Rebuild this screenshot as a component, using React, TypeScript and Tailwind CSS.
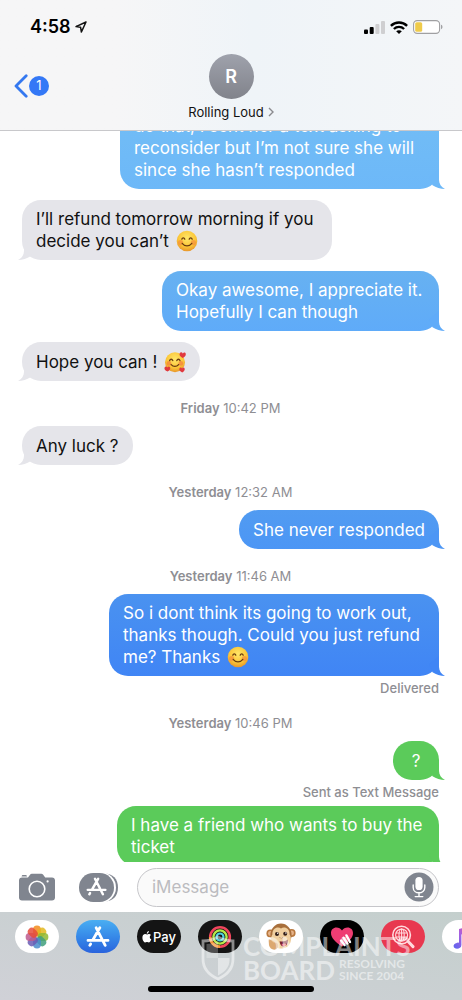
import React from 'react';

const tones = {
  gray: { bubble: 'bg-[#e5e5ea] text-[#111111]', tail: 'text-[#e5e5ea]' },
  sky: {
    bubble: 'bg-linear-to-b from-[#72bdf5] to-[#6db8f8] text-white',
    tail: 'text-[#6db8f8]',
  },
  azure: {
    bubble: 'bg-linear-to-b from-[#67b1f1] to-[#5fabf9] text-white',
    tail: 'text-[#5fabf9]',
  },
  blue: {
    bubble: 'bg-linear-to-b from-[#519bf1] to-[#4c96f5] text-white',
    tail: 'text-[#4c96f5]',
  },
  royal: {
    bubble: 'bg-linear-to-b from-[#4a92f0] to-[#4085f5] text-white',
    tail: 'text-[#4085f5]',
  },
  green: { bubble: 'bg-[#5bcb5a] text-white', tail: 'text-[#5bcb5a]' },
};

type BubbleProps = {
  tone: keyof typeof tones;
  lines: React.ReactNode[];
  width?: string;
};

const Bubble = ({ tone, lines, width = '' }: BubbleProps) => {
  const incoming = tone === 'gray';

  return (
    <div className={incoming ? 'flex justify-start' : 'flex justify-end'}>
      <div
        className={`relative flex min-h-[39px] items-center rounded-[19px] px-[14px] py-2 ${width} ${tones[tone].bubble}`}
      >
        <p className="text-[17px] leading-[22px]">
          {lines.map((line, index) => (
            <span key={index} className="block whitespace-nowrap">
              {line}
            </span>
          ))}
        </p>
        <svg
          viewBox="0 0 16 20"
          className={`absolute bottom-0 h-5 w-4 ${
            incoming ? '-left-1 -scale-x-100' : '-right-1.5'
          } ${tones[tone].tail}`}
          fill="currentColor"
          aria-hidden="true"
        >
          <path d="M10 0V11C10.2 15 12 18 16 20C11.5 19.8 7 18.6 3.5 16.2L0 8Z" />
        </svg>
      </div>
    </div>
  );
};

const Timestamp = ({ day, time }: { day: string; time: string }) => (
  <p className="pt-[19px] pb-2.5 text-center text-[13px] leading-4 text-[#8e8e93]">
    <span className="font-semibold">{day}</span> {time}
  </p>
);

const Status = ({ children }: { children: React.ReactNode }) => (
  <p className="pt-1 text-right text-[13px] leading-4 font-medium text-[#8e8e93]">
    {children}
  </p>
);

const SmileEmoji = () => (
  <svg
    viewBox="0 0 22 22"
    className="ml-0.5 inline h-[22px] w-[22px] align-top"
    role="img"
    aria-label="smiling face"
  >
    <defs>
      <radialGradient id="smile" cx="50%" cy="35%" r="65%">
        <stop offset="0" stopColor="#ffe769" />
        <stop offset="0.65" stopColor="#fbc638" />
        <stop offset="1" stopColor="#e8962a" />
      </radialGradient>
    </defs>
    <circle cx="11" cy="11" r="10.3" fill="url(#smile)" />
    <circle cx="4.6" cy="12.6" r="2.6" fill="#f58a3c" opacity="0.65" />
    <circle cx="17.4" cy="12.6" r="2.6" fill="#f58a3c" opacity="0.65" />
    <g fill="none" stroke="#6b3d10" strokeWidth="1.3" strokeLinecap="round">
      <path d="M5.8 9.2C6.4 7.4 8.2 7.4 8.8 9.2M13.2 9.2C13.8 7.4 15.6 7.4 16.2 9.2" />
      <path d="M6.2 13.4C8.6 16.7 13.4 16.7 15.8 13.4" />
    </g>
  </svg>
);

const HeartsEmoji = () => (
  <svg
    viewBox="0 0 22 22"
    className="ml-0.5 inline h-[22px] w-[22px] align-top"
    role="img"
    aria-label="smiling face with hearts"
  >
    <defs>
      <radialGradient id="hearts" cx="50%" cy="35%" r="65%">
        <stop offset="0" stopColor="#ffe769" />
        <stop offset="0.65" stopColor="#fbc638" />
        <stop offset="1" stopColor="#e8962a" />
      </radialGradient>
    </defs>
    <circle cx="11" cy="11.2" r="10" fill="url(#hearts)" />
    <circle cx="5" cy="12.4" r="2.4" fill="#f2703c" opacity="0.6" />
    <circle cx="16.8" cy="12.4" r="2.4" fill="#f2703c" opacity="0.6" />
    <g fill="none" stroke="#6b3d10" strokeWidth="1.3" strokeLinecap="round">
      <path d="M5.6 9.6C6.2 7.8 8.2 7.8 8.8 9.6M12.8 9.6C13.4 7.8 15.4 7.8 16 9.6" />
      <path d="M7.2 13.6C9.2 16 12.6 16 14.6 13.6" />
    </g>
    <g fill="#e0393e">
      <path d="M18.6 6.9C16 5.4 15 3.8 15.7 2.2C16.5 0.8 18.2 1.1 18.8 2.4C19.7 1.2 21.5 1.4 21.8 2.9C22 4.6 20.7 5.9 18.6 6.9Z" />
      <path d="M3.6 20.6C1 19.6 0 18 0.6 16.5C1.2 15.2 2.7 15.3 3.4 16.4C4.2 15.2 5.8 15.3 6.2 16.7C6.5 18.2 5.5 19.5 3.6 20.6Z" />
      <path d="M18.2 21.4C15.8 20.4 14.8 18.9 15.4 17.5C16 16.2 17.4 16.3 18 17.4C18.8 16.2 20.3 16.3 20.7 17.7C21 19.1 20 20.4 18.2 21.4Z" />
    </g>
  </svg>
);

const StatusBar = () => (
  <div className="flex h-[54px] items-center justify-between pr-[19px] pl-[30px]">
    <div className="flex items-center gap-1">
      <span className="text-lg leading-5 font-semibold text-black">4:58</span>
      <svg viewBox="0 0 12 12" className="h-3 w-3" fill="none" aria-hidden="true">
        <path
          d="M11 1L1 5.6L5.6 6.3L6.4 11Z"
          stroke="#111"
          strokeWidth="1.5"
          strokeLinejoin="round"
        />
      </svg>
    </div>
    <div className="flex items-center gap-[5px]">
      <svg viewBox="0 0 21 13" className="h-[13px] w-[21px]" aria-hidden="true">
        <rect x="0" y="8.5" width="4" height="4.5" rx="1" fill="#000" />
        <rect x="5.7" y="6" width="4" height="7" rx="1" fill="#000" />
        <rect x="11.4" y="3" width="4" height="10" rx="1" fill="#cfcfd1" />
        <rect x="17" y="0" width="4" height="13" rx="1" fill="#cfcfd1" />
      </svg>
      <svg viewBox="0 0 18 13" className="h-[13px] w-[18px]" aria-hidden="true">
        <g fill="none" stroke="#000" strokeWidth="2.4">
          <path d="M0.9 4.8C5.4 0.3 12.6 0.3 17.1 4.8" />
          <path d="M3.9 8C6.8 5.2 11.2 5.2 14.1 8" />
        </g>
        <path d="M9 13L6.2 10.2C7.8 8.8 10.2 8.8 11.8 10.2Z" fill="#000" />
      </svg>
      <svg viewBox="0 0 30 14" className="h-[14px] w-[30px]" aria-hidden="true">
        <rect
          x="0.6"
          y="0.6"
          width="26"
          height="12.8"
          rx="3.6"
          fill="#fff"
          stroke="#a0a0a2"
          strokeWidth="1.1"
        />
        <rect x="2.2" y="2.2" width="7" height="9.6" rx="1.6" fill="#efcb4b" />
        <path d="M28.2 4.8C29.8 5.4 29.8 8.6 28.2 9.2Z" fill="#8e8e90" />
      </svg>
    </div>
  </div>
);

const Header = () => (
  <header className="shrink-0 border-b border-[#c8c8cb] bg-linear-to-r from-[#f6f6f7] from-25% via-[#eff4f8] via-55% to-[#f4f6f8]">
    <StatusBar />
    <div className="grid h-[76px] grid-cols-3">
      <button
        type="button"
        aria-label="Back, 1 unread"
        className="mt-5 ml-3.5 flex h-6 items-center self-start"
      >
        <svg viewBox="0 0 15 24" className="h-6 w-[15px]" fill="none">
          <path
            d="M12.2 1.8L2 12L12.2 22.2"
            stroke="#3478f0"
            strokeWidth="2.8"
            strokeLinecap="round"
            strokeLinejoin="round"
          />
        </svg>
        <span className="flex h-5 w-5 items-center justify-center rounded-full bg-[#3478f6] text-[13px] text-white">
          1
        </span>
      </button>
      <a href="#contact" className="flex flex-col items-center">
        <span className="flex h-[45px] w-[45px] items-center justify-center rounded-full bg-linear-to-b from-[#9fa2ac] to-[#81838b] text-lg font-semibold text-white">
          R
        </span>
        <span className="mt-1 flex items-center gap-1 text-[13px] leading-[18px] text-[#111111]">
          Rolling Loud
          <svg viewBox="0 0 6 10" className="h-2.5 w-1.5" fill="none">
            <path d="M1 1L5 5L1 9" stroke="#8a8a8e" strokeWidth="1.4" />
          </svg>
        </span>
      </a>
    </div>
  </header>
);

const AppStoreGlyph = () => (
  <g fill="none" stroke="currentColor" strokeWidth="2.8" strokeLinecap="round">
    <path d="M10.2 1.8L19.2 19.4M13.8 1.8L6.8 14M2 14.4H14.6M18.6 14.4H22M4.6 18L3.8 19.4" />
  </g>
);

const Composer = () => (
  <form
    className="flex h-[50px] shrink-0 items-center bg-white pr-[23px] pl-[19px]"
    onSubmit={(e) => e.preventDefault()}
  >
    <button type="button" aria-label="Camera" className="mr-6">
      <svg viewBox="0 0 36 28" className="h-7 w-9">
        <path
          d="M3 4.5H9L11.2 1.6C11.6 1.1 12.2 0.8 12.8 0.8H22.4C23 0.8 23.6 1.1 24 1.6L26.2 4.5H33C34.8 4.5 36 5.7 36 7.5V24.5C36 26.3 34.8 27.5 33 27.5H3C1.2 27.5 0 26.3 0 24.5V7.5C0 5.7 1.2 4.5 3 4.5Z"
          fill="#80858f"
        />
        <path d="M2.6 3.6C2.6 2.6 3.2 2 4 2H6.6C7.4 2 8 2.6 8 3.6Z" fill="#80858f" />
        <circle cx="18" cy="16" r="7.8" fill="none" stroke="#fff" strokeWidth="1.6" />
        <circle cx="28.6" cy="8.4" r="1.1" fill="#fff" />
      </svg>
    </button>
    <button type="button" aria-label="Apps" className="mr-[19px]">
      <svg viewBox="0 0 39 29" className="h-[29px] w-[39px]">
        <path d="M25 0.5C34 0.5 39 6 39 14.5C39 23 34 28.5 25 28.5Z" fill="#80858f" />
        <rect x="-2" y="-1" width="39" height="31" rx="15.5" fill="#fff" />
        <rect x="0" y="0" width="35" height="29" rx="14.2" fill="#80858f" />
        <g transform="translate(7 4.2) scale(0.88)" color="#fff">
          <AppStoreGlyph />
        </g>
      </svg>
    </button>
    <div className="flex h-[39px] min-w-0 flex-1 items-center rounded-full border border-[#c6c6ca] bg-[#fafafa] pr-1 pl-3.5">
      <input
        type="text"
        aria-label="iMessage"
        placeholder="iMessage"
        className="min-w-0 flex-1 bg-transparent text-[17px] leading-[22px] outline-none placeholder:text-[#bcbcc0]"
      />
      <button type="button" aria-label="Record audio">
        <svg viewBox="0 0 30 30" className="h-[30px] w-[30px]">
          <circle cx="15" cy="15" r="14.5" fill="#80858f" />
          <rect x="11.4" y="5" width="7.2" height="13" rx="3.6" fill="#fff" />
          <path
            d="M9.2 13V15.4C9.2 22.6 20.8 22.6 20.8 15.4V13M15 21V24.4M11.2 24.6H18.8"
            fill="none"
            stroke="#fff"
            strokeWidth="1.4"
            strokeLinecap="round"
          />
        </svg>
      </button>
    </div>
  </form>
);

const petals = [
  { color: '#f28c1c', angle: 0 },
  { color: '#e3b91f', angle: 45 },
  { color: '#8fb834', angle: 90 },
  { color: '#3f9f7d', angle: 135 },
  { color: '#4a8ccb', angle: 180 },
  { color: '#6a5cb4', angle: 225 },
  { color: '#bd5a8e', angle: 270 },
  { color: '#e64c3a', angle: 315 },
];

const PhotosIcon = () => (
  <svg viewBox="0 0 24 24" className="h-6 w-6" aria-hidden="true">
    {petals.map((petal) => (
      <rect
        key={petal.angle}
        x="8.1"
        y="0.6"
        width="7.8"
        height="10.8"
        rx="3.9"
        fill={petal.color}
        opacity="0.85"
        transform={`rotate(${petal.angle} 12 12)`}
      />
    ))}
  </svg>
);

const AppStoreIcon = () => (
  <svg viewBox="0 0 24 22" className="h-[22px] w-6 text-white" aria-hidden="true">
    <AppStoreGlyph />
  </svg>
);

const PayIcon = () => (
  <span className="flex items-center gap-px text-[13px] leading-4 font-medium text-white">
    <svg viewBox="0 0 10 12" className="h-3 w-2.5" fill="#fff" aria-hidden="true">
      <path d="M6.9 0.1C7 1.5 5.9 2.7 4.8 2.7C4.7 1.4 5.7 0.3 6.9 0.1ZM8.9 4C7.2 5.1 7.4 7.6 9.3 8.4C8.8 9.9 7.8 11.5 6.7 11.5C6 11.5 5.8 11.1 5 11.1C4.2 11.1 3.9 11.5 3.3 11.5C1.9 11.5 0.4 8.8 0.4 6.7C0.4 4.5 1.7 3.1 3.2 3.1C4 3.1 4.6 3.6 5.1 3.6C5.6 3.6 6.2 3 7.2 3C7.9 3 8.5 3.4 8.9 4Z" />
    </svg>
    Pay
  </span>
);

const ActivityIcon = () => (
  <svg viewBox="0 0 24 24" className="h-6 w-6" fill="none" aria-hidden="true">
    <circle cx="12" cy="12" r="9.8" stroke="#f0455c" strokeWidth="2.6" />
    <path d="M2.2 12A9.8 9.8 0 0 0 12 21.8" stroke="#f59b3a" strokeWidth="2.6" />
    <circle cx="12" cy="12" r="6.6" stroke="#b4e84a" strokeWidth="2.4" />
    <circle cx="12" cy="12" r="3.5" stroke="#4fd3e0" strokeWidth="2.2" />
  </svg>
);

const MonkeyIcon = () => (
  <svg viewBox="0 0 30 30" className="h-[30px] w-[30px]" aria-hidden="true">
    <circle cx="4.4" cy="11.5" r="4" fill="#b9793f" />
    <circle cx="4.4" cy="11.5" r="2.4" fill="#e7b48a" />
    <circle cx="25.6" cy="11" r="4" fill="#b9793f" />
    <circle cx="25.6" cy="11" r="2.4" fill="#e7b48a" />
    <ellipse cx="15" cy="13" rx="10.6" ry="11.4" fill="#a86f3c" />
    <path
      d="M15 6.5C18 4 24 6 23.6 12.4C26.4 16 25.6 26.4 15 26.4C4.4 26.4 3.6 16 6.4 12.4C6 6 12 4 15 6.5Z"
      fill="#f0cf9f"
    />
    <circle cx="11" cy="12" r="2" fill="#33201a" />
    <circle cx="19.2" cy="11.8" r="2" fill="#33201a" />
    <circle cx="11.7" cy="11.2" r="0.7" fill="#fff" />
    <circle cx="19.9" cy="11" r="0.7" fill="#fff" />
    <path d="M14 15.6L14.6 16.2M16.6 15.6L16 16.2" stroke="#6b3d20" strokeWidth="1" />
    <path
      d="M13.6 19.2C17 20 19.4 19.4 22 17.6C22.2 21.4 20.6 24.4 17.4 24.4C15 24.2 13.8 22 13.6 19.2Z"
      fill="#7d2530"
    />
    <path d="M15.4 22.8C17 21 19.4 21 20.4 22.4C18.8 24.6 16.8 24.6 15.4 22.8Z" fill="#ee6d7d" />
    <path
      d="M2.6 17.4C4 16.4 5.6 18 7 20.2L10.4 20.8C13 22 12.6 25.8 10.2 27.2C7 28.6 3.8 26.4 3 23.2Z"
      fill="#dca870"
    />
  </svg>
);

const HeartIcon = () => (
  <svg viewBox="0 0 24 22" className="h-[22px] w-6" aria-hidden="true">
    <path
      d="M12 20.4C4.6 15.8 1 11.4 1 7C1 3.6 3.4 1.4 6.4 1.4C8.8 1.4 10.8 2.6 12 4.6C13.2 2.6 15.2 1.4 17.6 1.4C20.6 1.4 23 3.6 23 7C23 11.4 19.4 15.8 12 20.4Z"
      fill="#ee3d73"
    />
    <g stroke="#fff" strokeWidth="2.4" strokeLinecap="round">
      <path d="M16.4 9.4L20 16" />
      <path d="M13.6 11.8L17.4 17.6" />
      <path d="M11 14.6L14.6 19" />
    </g>
  </svg>
);

const SearchIcon = () => (
  <svg
    viewBox="0 0 24 24"
    className="h-6 w-6"
    fill="none"
    stroke="#ffd9dd"
    strokeLinecap="round"
    aria-hidden="true"
  >
    <circle cx="10.6" cy="10" r="8.8" strokeWidth="1.6" />
    <circle cx="10.6" cy="10" r="6" strokeWidth="1.1" />
    <ellipse cx="10.6" cy="10" rx="2.6" ry="6" strokeWidth="1.1" />
    <path d="M5 8H16.2M5 12H16.2M10.6 4V16" strokeWidth="1.1" />
    <path d="M17.4 16.8L22 21.6" strokeWidth="3" />
  </svg>
);

const MusicIcon = () => (
  <svg viewBox="0 0 24 24" className="h-6 w-6" aria-hidden="true">
    <defs>
      <linearGradient id="note" x1="0" y1="1" x2="1" y2="0">
        <stop offset="0" stopColor="#5a66f0" />
        <stop offset="0.5" stopColor="#a85fe0" />
        <stop offset="1" stopColor="#f0508c" />
      </linearGradient>
    </defs>
    <path
      d="M7 4L21 1V17.4C21 22 13.4 22.6 13.4 18.6C13.4 16 16 15.4 18.6 15V7.4L9.4 9.4V20C9.4 24.6 1.6 25 1.6 21C1.6 18.4 4.4 17.8 7 17.4Z"
      fill="url(#note)"
    />
  </svg>
);

const apps = [
  { name: 'Photos', icon: <PhotosIcon />, color: 'bg-white' },
  {
    name: 'App Store',
    icon: <AppStoreIcon />,
    color: 'bg-linear-to-b from-[#4aaef2] to-[#2a63dd]',
  },
  { name: 'Apple Pay', icon: <PayIcon />, color: 'bg-[#141414]' },
  { name: 'Activity', icon: <ActivityIcon />, color: 'bg-[#141414]' },
  { name: 'Animoji', icon: <MonkeyIcon />, color: 'bg-white' },
  { name: 'Digital Touch', icon: <HeartIcon />, color: 'bg-black' },
  { name: 'Images', icon: <SearchIcon />, color: 'bg-[#e8384f]' },
  { name: 'Music', icon: <MusicIcon />, color: 'bg-white' },
];

const Watermark = () => (
  <div className="pointer-events-none absolute top-[22px] left-[201px] flex items-center gap-2 text-white/50">
    <svg viewBox="0 0 34 46" className="h-[46px] w-[34px]" aria-hidden="true">
      <path
        d="M17 2C12 5 7 6 2 6V24C2 34 8 40 17 44C26 40 32 34 32 24V6C27 6 22 5 17 2Z"
        fill="none"
        stroke="currentColor"
        strokeWidth="2.8"
      />
      <path d="M17 6V23H5.5V9C10 9 13.5 8 17 6Z" fill="currentColor" opacity="0.5" />
      <path d="M17 23H28.5V25C28.5 32 24 37 17 40.5Z" fill="currentColor" opacity="0.9" />
    </svg>
    <div className="font-[Lato,sans-serif] font-bold">
      <p className="text-[26px] leading-6">COMPLAINTS</p>
      <div className="flex items-center gap-1">
        <span className="text-[26px] leading-6">BOARD</span>
        <span className="text-xs leading-3">
          RESOLVING
          <br />
          SINCE 2004
        </span>
      </div>
    </div>
  </div>
);

const AppDrawer = () => (
  <nav className="relative flex h-[88px] shrink-0 flex-col items-center justify-between overflow-hidden bg-linear-to-bl from-[#c4cfcd] to-[#d0d1d7] pt-2 pb-2">
    <div className="flex w-full gap-[17px] overflow-hidden pl-[15px]">
      {apps.map((app) => (
        <button
          key={app.name}
          type="button"
          aria-label={app.name}
          className={`flex h-[33px] w-11 shrink-0 items-center justify-center overflow-hidden rounded-[17px] ${app.color}`}
        >
          {app.icon}
        </button>
      ))}
    </div>
    <Watermark />
    <div className="relative h-1.5 w-[166px] rounded-full bg-black" />
  </nav>
);

const App = () => {
  return (
    <div className="flex h-screen flex-col overflow-hidden bg-white font-[Inter,'Liberation_Sans',sans-serif]">
      <Header />
      <main className="min-h-0 flex-1 overflow-hidden pr-[23px] pl-[22px]">
        {/* the thread is scrolled, so the first message sits partly under the header */}
        <div className="-mt-6 flex flex-col gap-[11px]">
          <Bubble
            tone="sky"
            width="min-w-[319px]"
            lines={[
              'do that, I sent her a text asking to',
              'reconsider but I’m not sure she will',
              'since she hasn’t responded',
            ]}
          />
          <Bubble
            tone="gray"
            width="min-w-[310px]"
            lines={[
              'I’ll refund tomorrow morning if you',
              <>
                decide you can’t <SmileEmoji />
              </>,
            ]}
          />
          <Bubble
            tone="azure"
            width="min-w-[277px]"
            lines={['Okay awesome, I appreciate it.', 'Hopefully I can though']}
          />
          <Bubble
            tone="gray"
            lines={[
              <>
                Hope you can ! <HeartsEmoji />
              </>,
            ]}
          />
        </div>
        <Timestamp day="Friday" time="10:42 PM" />
        <Bubble tone="gray" lines={['Any luck ?']} />
        <Timestamp day="Yesterday" time="12:32 AM" />
        <Bubble tone="blue" lines={['She never responded']} />
        <Timestamp day="Yesterday" time="11:46 AM" />
        <Bubble
          tone="royal"
          width="min-w-[330px]"
          lines={[
            'So i dont think its going to work out,',
            'thanks though. Could you just refund',
            <>
              me? Thanks <SmileEmoji />
            </>,
          ]}
        />
        <Status>Delivered</Status>
        <Timestamp day="Yesterday" time="10:46 PM" />
        <Bubble tone="green" width="min-w-[46px] justify-center" lines={['?']} />
        <Status>Sent as Text Message</Status>
        <div className="pt-1.5">
          <Bubble
            tone="green"
            width="min-w-[322px]"
            lines={['I have a friend who wants to buy the', 'ticket']}
          />
        </div>
      </main>
      <Composer />
      <AppDrawer />
    </div>
  );
};

export default App;
